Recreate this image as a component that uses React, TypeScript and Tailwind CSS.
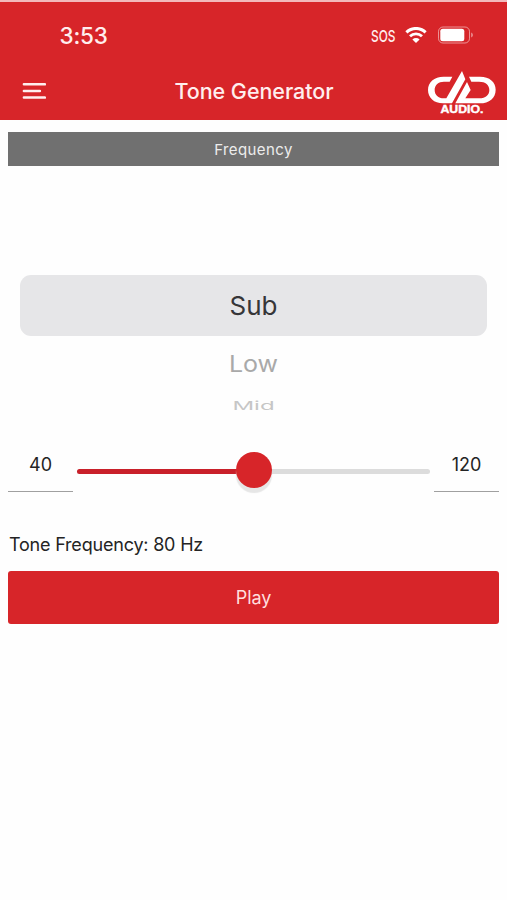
import { useState } from "react";

const tones = [
  { name: "Sub", min: 40, max: 120 },
  { name: "Low", min: 120, max: 500 },
  { name: "Mid", min: 500, max: 2000 },
];

function WifiIcon({ className }: { className?: string }) {
  return (
    <svg viewBox="0 0 22 16" fill="none" className={className}>
      <path d="M1.4 5.4a13.6 13.6 0 0 1 19.2 0" stroke="currentColor" strokeWidth="3" />
      <path d="M5 9.3a8.5 8.5 0 0 1 12 0" stroke="currentColor" strokeWidth="2.8" />
      <path d="M7.4 12.5a5.1 5.1 0 0 1 7.2 0L11 16z" fill="currentColor" />
    </svg>
  );
}

function BatteryIcon({ className }: { className?: string }) {
  return (
    <svg viewBox="0 0 36 18" fill="none" className={className}>
      <rect x="0.5" y="1" width="31" height="16" rx="4.5" stroke="currentColor" strokeOpacity="0.5" />
      <rect x="2.3" y="2.8" width="24" height="12.4" rx="2.5" fill="currentColor" />
      <path d="M33.2 6.5c2.2.8 2.2 4.2 0 5z" fill="currentColor" fillOpacity="0.5" />
    </svg>
  );
}

function MenuIcon({ className }: { className?: string }) {
  return (
    <svg viewBox="0 0 24 18" fill="none" className={className}>
      <path d="M1.9 2.2h21M1.9 8.9h16M1.9 15.6h21" stroke="currentColor" strokeWidth="2.5" strokeLinecap="round" />
    </svg>
  );
}

function Logo() {
  return (
    <div className="flex w-[68px] flex-col items-center pt-[3px] text-white">
      <svg viewBox="0 0 204 102" className="h-[34px] w-[68px]" fill="currentColor">
        <path d="M73 17H47C18 17 0 34 0 57s18 40 45 40h27l40-72-10-25-47 82h-8c-16 0-27-10-27-25s11-25 28-25h17z" />
        <path d="M123 17h33c29 0 47 16 47 39 0 25-19 41-48 41H82l35-64 11 24-16 25h42c19 0 30-10 30-25s-11-25-31-25h-23z" />
      </svg>
      <svg viewBox="0 0 44 10" className="h-2.5 w-11 overflow-visible">
        <text
          x="0.5"
          y="8.2"
          textLength="43"
          lengthAdjust="spacingAndGlyphs"
          fill="currentColor"
          stroke="currentColor"
          strokeWidth="0.4"
          className="font-['Liberation_Sans'] text-[10.5px] font-bold"
        >
          AUDIO.
        </text>
      </svg>
    </div>
  );
}

export default function App() {
  const [selected, setSelected] = useState(0);
  const [frequency, setFrequency] = useState(80);
  const [playing, setPlaying] = useState(false);

  const { min, max } = tones[selected];
  const percent = ((frequency - min) / (max - min)) * 100;

  const selectTone = (index: number) => {
    setSelected(index);
    setFrequency((tones[index].min + tones[index].max) / 2);
  };

  return (
    <div className="flex h-[900px] w-[507px] flex-col overflow-hidden bg-[#fefefe] font-['Inter',sans-serif] text-[#242424]">
      <header className="h-[119.5px] border-t-2 border-[#f3b9bb] bg-[#d72529] text-[#ffeeee]">
        <div className="flex h-[66px] items-center pr-[33px] pl-[59.5px]">
          <span className="pt-px text-[22.5px] font-medium tracking-[-0.2px]">3:53</span>
          <div className="ml-auto flex items-center">
            <svg viewBox="0 0 25 20" className="mt-0.5 h-5 w-[25px] overflow-visible">
              <text
                x="-1"
                y="15.5"
                textLength="24.5"
                lengthAdjust="spacingAndGlyphs"
                fill="currentColor"
                className="text-[16.5px] font-medium"
              >
                SOS
              </text>
            </svg>
            <WifiIcon className="ml-[8px] h-4 w-[22px] text-white" />
            <BatteryIcon className="ml-[11px] h-[18px] w-9 text-white" />
          </div>
        </div>
        <div className="flex h-[46px] items-center pr-[11px] pl-[22px]">
          <button type="button" aria-label="Menu" className="w-[68px]">
            <MenuIcon className="h-[18px] w-6" />
          </button>
          <h1 className="flex-1 pr-[10px] text-center text-[21.5px] font-medium tracking-[-0.05px]">
            Tone Generator
          </h1>
          <Logo />
        </div>
      </header>

      <main className="flex flex-col px-[8px] pt-3">
        <div className="h-[34px] bg-[#707070] text-center text-[15px] leading-[35px] tracking-[0.4px] text-[#ececec]">
          Frequency
        </div>

        <div className="mx-3 mt-[109.5px] flex h-[160px] flex-col">
          <button
            type="button"
            onClick={() => selectTone(0)}
            className="h-[61px] rounded-[11px] bg-[#e6e6e8] text-[26px] leading-[62px] text-[#363638]"
          >
            Sub
          </button>
          <button
            type="button"
            onClick={() => selectTone(1)}
            className="h-[56px] text-[25px] leading-[56px] text-[#a9a9a9]"
          >
            <span className="inline-block scale-y-[0.9]">Low</span>
          </button>
          <button
            type="button"
            onClick={() => selectTone(2)}
            className="h-[26px] text-[24px] leading-[28px] text-[#c6c6c6]"
          >
            <span className="inline-block scale-y-[0.5]">Mid</span>
          </button>
        </div>

        <div className="mt-[10.5px] flex h-[46px] gap-1">
          <div className="w-[65px] border-b-[1.5px] border-[#a0a0a0] text-center text-[18px] leading-[38px]">
            {min}
          </div>
          <div className="flex flex-1 items-center pt-[5px]">
            <div className="relative h-[5px] w-full rounded-full bg-[#dcdcdc]">
              <div
                className="h-full rounded-full bg-[#c9202a]"
                style={{ width: `${percent}%` }}
              />
              <div
                className="pointer-events-none absolute -top-[17px] size-9 -translate-x-1/2 rounded-full bg-[#d72529] shadow-[0_5px_1px_#e6e6e6]"
                style={{ left: `${percent}%` }}
              />
              <input
                type="range"
                aria-label="Tone Frequency"
                min={min}
                max={max}
                value={frequency}
                onChange={(e) => setFrequency(Number(e.target.value))}
                className="absolute -top-4 left-0 h-9 w-full cursor-pointer opacity-0"
              />
            </div>
          </div>
          <div className="w-[65px] border-b-[1.5px] border-[#a0a0a0] text-center text-[18px] leading-[38px]">
            {max}
          </div>
        </div>

        <p className="mt-[39px] pl-px text-[18px] leading-[27px] tracking-[-0.2px]">
          Tone Frequency: {frequency} Hz
        </p>
        <button
          type="button"
          onClick={() => setPlaying(!playing)}
          className="mt-[13px] h-[53px] rounded-[3px] bg-[#d72529] text-[18px] tracking-[-0.1px] text-[#ffdede]"
        >
          {playing ? "Stop" : "Play"}
        </button>
      </main>
    </div>
  );
}
